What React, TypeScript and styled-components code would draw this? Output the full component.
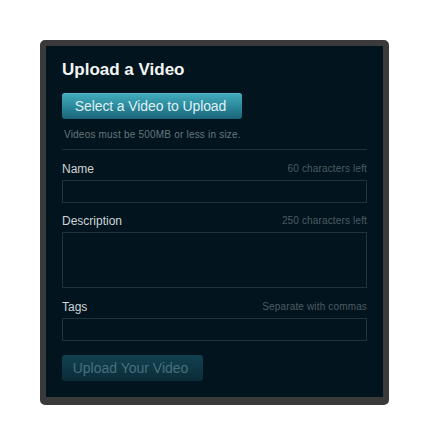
import React from "react";
import styled, { createGlobalStyle } from "styled-components";

const Global = createGlobalStyle`
  html, body { margin: 0; padding: 0; background: #fff; }
  body { width: 429px; height: 445px; overflow: hidden; font-family: "Liberation Sans", Arial, sans-serif; }
`;
const Page = styled.div`
  padding: 40px;
  box-sizing: border-box;
  width: 429px;
  height: 445px;
`;
const Panel = styled.form`
  box-sizing: border-box;
  width: 349px;
  height: 365px;
  background: #02141d;
  border: 6px solid #3a3a3a;
  border-bottom-width: 8px;
  border-radius: 5px;
  padding: 14px 16px 0;
  display: flex;
  flex-direction: column;
`;
const Title = styled.h1`
  margin: 0;
  font-size: 17px;
  line-height: 20px;
  font-weight: 700;
  color: #f2f4f5;
`;
const SelectButton = styled.button`
  box-sizing: border-box;
  margin-top: 13px;
  width: 180px;
  height: 26px;
  padding: 0 3px 0 0;
  border: 0;
  border-radius: 3px;
  background: linear-gradient(#41aebf, #1a6478);
  box-shadow: inset 0 1px 0 rgba(255, 255, 255, 0.12);
  color: #dff1f5;
  font: 14px/25px "Liberation Sans", Arial, sans-serif;
  letter-spacing: -0.1px;
`;
const Hint = styled.p`
  margin: 11px 0 0 2px;
  font-size: 10px;
  line-height: 10px;
  letter-spacing: 0.2px;
  color: #66777e;
`;
const Divider = styled.hr`
  margin: 9px 0 0;
  border: 0;
  height: 1px;
  background: #1e333b;
`;
const Field = styled.div<{ $top: number }>`
  margin-top: ${(p) => p.$top}px;
  display: flex;
  flex-direction: column;
`;
const FieldHead = styled.div`
  display: flex;
  justify-content: space-between;
  align-items: center;
  height: 12px;
  margin-bottom: 5px;
`;
const Label = styled.label`
  font-size: 12px;
  line-height: 12px;
  color: #cdd5d8;
`;
const Note = styled.span`
  font-size: 10px;
  line-height: 12px;
  letter-spacing: 0.15px;
  color: #4c5c63;
`;
const TextBox = styled.div<{ $h: number }>`
  box-sizing: border-box;
  height: ${(p) => p.$h}px;
  border: 1px solid #1e333b;
  background: #02141d;
`;
const SubmitButton = styled.button`
  box-sizing: border-box;
  margin-top: 14px;
  width: 141px;
  height: 26px;
  padding: 0 4px 0 0;
  border: 0;
  border-radius: 3px;
  background: linear-gradient(#12414f, #0b2c38);
  color: #45707d;
  font: 14px/26px "Liberation Sans", Arial, sans-serif;
`;

export default function App() {
  return (
    <Page>
      <Global />
      <Panel onSubmit={(e) => e.preventDefault()}>
        <Title>Upload a Video</Title>
        <SelectButton type="button">Select a Video to Upload</SelectButton>
        <Hint>Videos must be 500MB or less in size.</Hint>
        <Divider />
        <Field $top={13}>
          <FieldHead><Label>Name</Label><Note>60 characters left</Note></FieldHead>
          <TextBox $h={23} />
        </Field>
        <Field $top={12}>
          <FieldHead><Label>Description</Label><Note>250 characters left</Note></FieldHead>
          <TextBox $h={56} />
        </Field>
        <Field $top={13}>
          <FieldHead><Label>Tags</Label><Note>Separate with commas</Note></FieldHead>
          <TextBox $h={23} />
        </Field>
        <SubmitButton type="button">Upload Your Video</SubmitButton>
      </Panel>
    </Page>
  );
}
